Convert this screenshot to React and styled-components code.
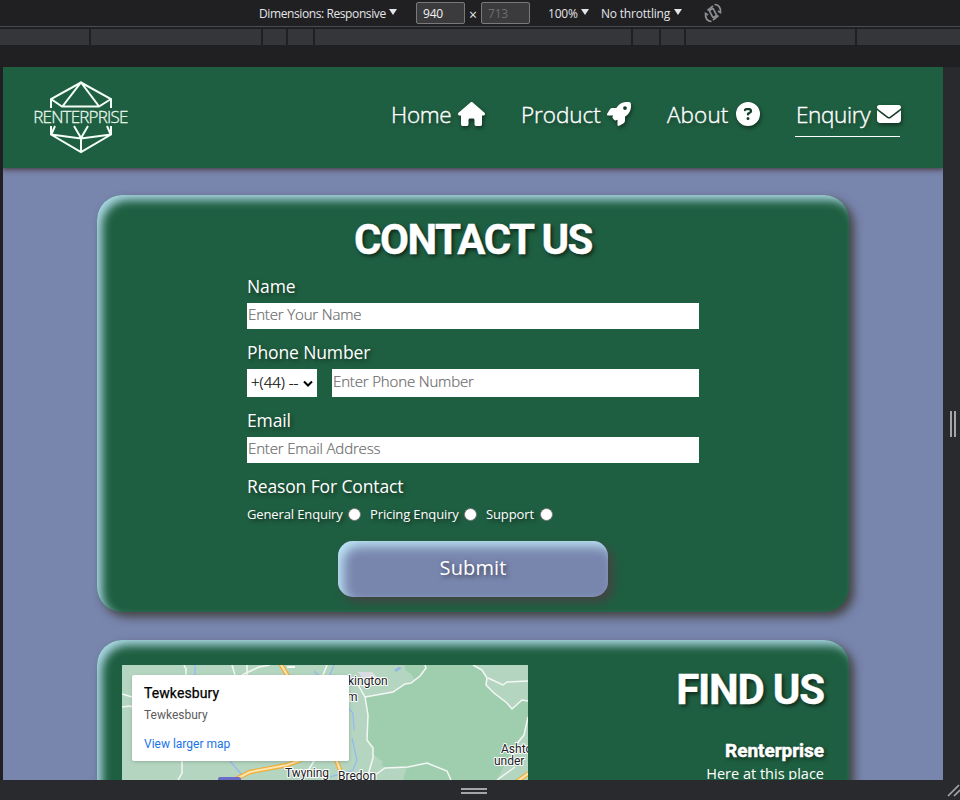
import React from "react";
import styled, { createGlobalStyle, css } from "styled-components";
import { FaHouse, FaRocket, FaCircleQuestion, FaEnvelope } from "react-icons/fa6";

const GlobalStyle = createGlobalStyle`
  * { box-sizing: border-box; }
  body { margin: 0; background: #202023; overflow: hidden; }
`;

const body = `"Open Sans", "Noto Sans", sans-serif`;
const head = `Roboto, "Liberation Sans", sans-serif`;
const green = "#1f5f41";
const slate = "#7885ad";

const Screen = styled.div`
  width: 960px;
  height: 800px;
  display: flex;
  flex-direction: column;
  overflow: hidden;
  background: #202023;
`;

/* device toolbar */
const Toolbar = styled.div`
  height: 27px;
  flex: none;
  display: flex;
  align-items: center;
  padding-left: 259px;
  border-bottom: 1px solid #4a4c50;
  background: #202023;
  color: #e4e5e8;
  font: 12px/26px ${body};
  white-space: nowrap;
`;
const Choice = styled.div`
  width: ${(p) => p.$w}px;
  margin-left: ${(p) => p.$before || 0}px;
  margin-right: ${(p) => p.$gap}px;
  padding-top: 1px;
  display: flex;
  align-items: center;
  justify-content: space-between;
  letter-spacing: ${(p) => p.$ls || 0}px;
`;
const Caret = styled.span`
  border: 4px solid transparent;
  border-top: 6px solid #e4e5e8;
  border-bottom: 0;
  margin-bottom: 3px;
`;
const SizeBox = styled.div`
  width: 49px;
  height: 22px;
  border: 1px solid #77797c;
  border-radius: 2px;
  background: #3b3b3d;
  padding-left: 6px;
  line-height: 22px;
  letter-spacing: -0.2px;
  color: ${(p) => (p.$off ? "#6d6e70" : "#f1f1f2")};
`;
const Times = styled.span`
  width: 16px;
  padding-top: 3px;
  text-align: center;
  font-size: 14px;
`;
const RotateIcon = styled.svg`
  width: 20px;
  height: 20px;
  margin-left: 1px;
`;

const Ruler = styled.div`
  height: 16px;
  flex: none;
  margin: 2px 0 22px;
  display: grid;
  grid-template-columns: 89px 170px 23px 25px 316px 26px 23px 169px 1fr;
  column-gap: 2px;
`;
const Segment = styled.div`
  background: #35363a;
`;

const Stage = styled.div`
  flex: 1;
  min-height: 0;
  display: grid;
  grid-template: 713px 20px / 940px 17px;
  padding-left: 3px;
`;
const SideGrip = styled.div`
  background: #292a2e;
  display: flex;
  align-items: center;
  justify-content: center;
  gap: 2px;
  padding-left: 3px;
`;
const BottomGrip = styled.div`
  background: #292a2e;
  margin-left: -3px;
  display: flex;
  flex-direction: column;
  align-items: center;
  justify-content: center;
  gap: 2px;
  padding: 2px 0 0 5px;
`;
const Bar = styled.span`
  background: #a3a5a8;
  ${(p) => (p.$v ? "width: 2px; height: 26px;" : "width: 26px; height: 2px;")}
`;
const Corner = styled.div`
  background: #292a2e;
  display: flex;
  align-items: flex-end;
  justify-content: flex-end;
  svg { width: 13px; height: 14px; display: block; margin-bottom: 2px; }
`;

/* page */
const Page = styled.main`
  background: ${slate};
  overflow: hidden;
`;
const Header = styled.header`
  height: 101px;
  padding: 0 43px 0 27px;
  display: flex;
  justify-content: space-between;
  background: ${green};
  box-shadow: 0 1px 5px 1px rgba(70, 55, 60, 0.9);
`;
const Logo = styled.svg`
  width: 104px;
  height: 80px;
  margin-top: 11px;
  text { font: 300 17px ${body}; fill: #e6f7ec; stroke: #e6f7ec; stroke-width: 0.3px; }
`;
const Nav = styled.nav`
  display: flex;
  gap: 36px;
  margin-top: 28px;
  height: 42px;
`;
const NavLink = styled.a`
  width: ${(p) => p.$w}px;
  padding-left: 1px;
  display: flex;
  justify-content: space-between;
  white-space: nowrap;
  color: #fff;
  font: 300 22.5px/40px ${body};
  -webkit-text-stroke: 0.4px #fff;
  letter-spacing: ${(p) => p.$ls}px;
  text-shadow: 2px 2px 4px rgba(0, 0, 0, 0.45);
  border-bottom: ${(p) => (p.$active ? "1px solid #fff" : "0")};
  svg {
    flex: none;
    height: 24px;
    width: ${(p) => p.$icon}px;
    margin-top: 7px;
    margin-right: -1px;
    filter: drop-shadow(1px 2px 2px rgba(0, 0, 0, 0.5));
  }
`;

const Card = styled.section`
  width: 752px;
  height: ${(p) => p.$h}px;
  margin: ${(p) => p.$top}px auto 0;
  border-radius: 25px;
  background: ${green};
  box-shadow: inset 6px 6px 10px -1px lightblue, 5px 5px 10px #444;
`;
const Title = styled.h1`
  margin: 0;
  height: 48px;
  font: 700 42px/50px ${head};
  letter-spacing: ${(p) => p.$ls}px;
  color: #fff;
  white-space: nowrap;
  -webkit-text-stroke: 0.4px #fff;
  text-shadow: 2px 2px 4px rgba(0, 0, 0, 0.65);
`;
const ContactCard = styled(Card)`
  padding-top: 20px;
  text-align: center;
`;
const Form = styled.form`
  width: 452px;
  margin-left: 150px;
  text-align: left;
  display: flex;
  flex-direction: column;
`;
const Label = styled.label`
  margin-top: 8px;
  height: 32px;
  color: #fff;
  font: 400 17.5px/30px ${body};
  letter-spacing: -0.12px;
  text-shadow: 2px 2px 4px rgba(0, 0, 0, 0.5);
`;
const control = css`
  height: ${(p) => p.$h || 26}px;
  border: 0;
  border-radius: 0;
  background: #fff;
  font: 300 15px/22px ${body};
`;
const Input = styled.input`
  ${control}
  width: 100%;
  padding: 0 1px 4px;
  letter-spacing: -0.15px;
  &::placeholder {
    color: #6b6b6b;
    opacity: 1;
    -webkit-text-stroke: 0.2px #6b6b6b;
  }
`;
const PhoneRow = styled.div`
  display: grid;
  grid-template-columns: 70px 367px;
  gap: 15px;
`;
const Code = styled.div`
  ${control}
  padding: 0 4px 2px 4px;
  display: flex;
  align-items: center;
  justify-content: space-between;
  color: #000;
  white-space: nowrap;
  -webkit-text-stroke: 0.2px #000;
  svg { width: 10px; height: 8px; margin-top: 3px; }
`;
const CodeText = styled.span`
  width: 48px;
  overflow: hidden;
`;
const Radios = styled.div`
  height: 22px;
  display: flex;
  gap: 9px;
`;
const Radio = styled.label`
  width: ${(p) => p.$w}px;
  display: flex;
  align-items: center;
  justify-content: space-between;
  white-space: nowrap;
  color: #fff;
  font: 400 13px/20px ${body};
  letter-spacing: -0.12px;
  text-shadow: 2px 2px 4px rgba(0, 0, 0, 0.6);
`;
const Dot = styled.span`
  flex: none;
  width: 13px;
  height: 13px;
  margin-top: 1px;
  border-radius: 50%;
  border: 1px solid #767676;
  background: #fff;
`;
const Submit = styled.button`
  width: 270px;
  height: 56px;
  margin: 16px 0 0 91px;
  padding: 0 0 2px;
  border: 0;
  border-radius: 15px;
  background: ${slate};
  color: #fff;
  font: 400 20px/54px ${body};
  letter-spacing: 0.1px;
  text-shadow: 2px 2px 4px rgba(0, 0, 0, 0.5);
  box-shadow: inset 6px 6px 12px -1px #bfe8f8, 5px 5px 10px #444;
`;

const FindCard = styled(Card)`
  padding: 25px 25px 0;
  display: flex;
  justify-content: space-between;
`;
const MapFrame = styled.div`
  position: relative;
  width: 406px;
  height: 300px;
  overflow: hidden;
  background: #b4d6c1;
  > svg { display: block; width: 406px; height: 115px; }
  text {
    font: 400 12px ${head};
    fill: #202124;
    stroke: #fff;
    stroke-width: 2px;
    stroke-linejoin: round;
    paint-order: stroke;
  }
`;
const Place = styled.div`
  position: absolute;
  left: 10px;
  top: 10px;
  width: 217px;
  height: 86px;
  padding: 10px 12px;
  background: #fff;
  border-radius: 2px;
  box-shadow: 0 1px 4px -1px rgba(0, 0, 0, 0.3);
  font: 400 12px/16px ${head};
  color: #5b5b5b;
`;
const PlaceName = styled.div`
  font: 400 14px/17px ${head};
  letter-spacing: 0.08px;
  color: #000;
  -webkit-text-stroke: 0.25px #000;
  margin-bottom: 5px;
`;
const MapLink = styled.a`
  display: block;
  margin-top: 13px;
  color: #1a73e8;
`;
const Address = styled.div`
  text-align: right;
  color: #fff;
  white-space: nowrap;
`;
const Company = styled.h2`
  margin: 27px 0 0;
  height: 22px;
  font: 700 19px/22px ${head};
  letter-spacing: -0.05px;
  -webkit-text-stroke: 0.5px #fff;
  text-shadow: 2px 2px 4px rgba(0, 0, 0, 0.65);
`;
const Line = styled.p`
  margin: 0;
  font: 400 14.5px/24px ${body};
`;

const links = [
  { text: "Home", Icon: FaHouse, w: 94, icon: 27, ls: -0.3 },
  { text: "Product", Icon: FaRocket, w: 110, icon: 24, ls: -0.05 },
  { text: "About", Icon: FaCircleQuestion, w: 93, icon: 24, ls: 0.1 },
  { text: "Enquiry", Icon: FaEnvelope, w: 105, icon: 24, ls: -0.35, active: true },
];

const reasons = [
  { text: "General Enquiry", w: 114 },
  { text: "Pricing Enquiry", w: 107 },
  { text: "Support", w: 67 },
];

function DeviceToolbar() {
  return (
    <Toolbar>
      <Choice $w={138} $gap={19} $ls={-0.4}>Dimensions: Responsive<Caret /></Choice>
      <SizeBox>940</SizeBox>
      <Times>×</Times>
      <SizeBox $off>713</SizeBox>
      <Choice $w={41} $before={18} $gap={12} $ls={-0.2}>100%<Caret /></Choice>
      <Choice $w={81} $gap={20} $ls={-0.2}>No throttling<Caret /></Choice>
      <RotateIcon viewBox="0 0 20 20" fill="none" stroke="#8b8d90" strokeWidth="1.7">
        <rect x="7.8" y="6" width="4.400" height="8" rx="0.800" transform="rotate(-28 10 10)" />
        <path d="M4.500 7.500 10 3M10 17l5.500-4.500" />
        <path d="M11.500 1.500C15.500 1.500 18 4.500 17.500 9.500L15 8M8.500 18.500C4.500 18.500 2 15.500 2.500 10.500L5 12" />
      </RotateIcon>
    </Toolbar>
  );
}

function Brand() {
  return (
    <Logo viewBox="30 78 104 80" fill="none" stroke="#f4fff8" strokeWidth="2">
      <path d="M51 108V99L81 82.500l30 16.500v9M51 99l11 7.500h37l12-7.500M62 107l19-24.500L99.500 107" />
      <path d="M51 126v8.500L81 152l30-17.500V126M51 134.500l30 4 30-4M81 138v14M74 126l7 12 7-12M55 126l-3.500 8M107 126l3.500 8" />
      <text x="33.300" y="123" textLength="95" lengthAdjust="spacing">RENTERPRISE</text>
    </Logo>
  );
}

function AreaMap() {
  return (
    <svg viewBox="0 0 406 115" fill="none">
      <rect width="406" height="115" fill="#b4d6c1" />
      <path d="M283 0h68l9 5 5 8-1 7 8 8 13 10 5 6 10-9 6 1v79H281l4-13-22 1-12-10v-10l-6-8 1-25-3-18 28-5 12-8 10-4-4-6-6-4z" fill="#9fceae" />
      <path d="M251 89l10 8-4 7-6 4z" fill="#b4d6c1" />
      <path d="M406 52l-5 18-8 8-18 37h31z" fill="#b4d6c1" />
      <path d="M236 7h14l6 6-14 2z" fill="#d9dde2" />
      <path d="M272 5l5-3 3 1-6 4z" fill="#8fb7ea" />
      <g stroke="#96b9ee" strokeWidth="1.300">
        <path d="M73 0v10M226 43l5 5 1 17M230 73l5 22-4 10c-8 4-14 4-23 7M108 96l12 14M192 6l12 12M212 0l-5 12" />
      </g>
      <g stroke="#f4f7f5" strokeWidth="1.500">
        <path d="M62 0l2 4v6M110 0l3 10M120 10l17-8 11-2M0 29l10 3M0 42l8-1 8 3M60 96v12l-4 7M192 96l-11 18M205 0l-4 10M125 0v10" />
        <path d="M235 18l8 14 3 18-1 25 6 8v10l-5 17M243 32l28-5 12-8 6-1 9-7 6-8-1-3M246 115l7-5 10-7 23-1 19-4 20 8 4 9" />
        <path d="M351 0l9 5 5 8-1 7 8 8 13 10 5 6 10-9 6 1M366 13l15 7 4-3 21-1M406 52l-4 18-8 10M393 102l-18 13" />
      </g>
      <path d="M235 0v22l2 30-1 32" stroke="#c4cdca" strokeWidth="1" />
      <g stroke="#f0ad35" strokeWidth="4.500">
        <path d="M158-2l9 15M108 117l20-10 37-7 14-5M214 94l8 22M393 118l14-10" />
      </g>
      <g stroke="#fbe3ae" strokeWidth="2.200">
        <path d="M158-2l9 15M108 117l20-10 37-7 14-5M214 94l8 22M393 118l14-10" />
      </g>
      <path d="M165 2h8" stroke="#f4f7f5" strokeWidth="2" />
      <rect x="96" y="112" width="23" height="10" rx="2" fill="#6b6bc8" />
      <text x="226" y="19.500">kington</text>
      <text x="225" y="35.500">m</text>
      <text x="163" y="112" textLength="44">Twyning</text>
      <text x="216" y="115">Bredon</text>
      <text x="379" y="88">Ashton</text>
      <text x="372" y="100">under</text>
    </svg>
  );
}

export default function App() {
  return (
    <Screen>
      <GlobalStyle />
      <DeviceToolbar />
      <Ruler>
        {Array.from({ length: 9 }, (_, i) => <Segment key={i} />)}
      </Ruler>
      <Stage>
        <Page>
          <Header>
            <Brand />
            <Nav>
              {links.map(({ text, Icon, w, icon, ls, active }) => (
                <NavLink key={text} $w={w} $icon={icon} $ls={ls} $active={active}>
                  {text}
                  <Icon />
                </NavLink>
              ))}
            </Nav>
          </Header>
          <ContactCard $h={417} $top={27}>
            <Title $ls={-1.5}>CONTACT US</Title>
            <Form>
              <Label>Name</Label>
              <Input placeholder="Enter Your Name" />
              <Label>Phone Number</Label>
              <PhoneRow>
                <Code $h={28}>
                  <CodeText>+(44) --</CodeText>
                  <svg viewBox="0 0 10 8" fill="none" stroke="#000" strokeWidth="2"><path d="M1 1.500l4 4 4-4" /></svg>
                </Code>
                <Input placeholder="Enter Phone Number" $h={28} />
              </PhoneRow>
              <Label>Email</Label>
              <Input placeholder="Enter Email Address" />
              <Label>Reason For Contact</Label>
              <Radios>
                {reasons.map((r) => (
                  <Radio key={r.text} $w={r.w}>{r.text}<Dot /></Radio>
                ))}
              </Radios>
              <Submit type="button">Submit</Submit>
            </Form>
          </ContactCard>
          <FindCard $h={400} $top={28}>
            <MapFrame>
              <AreaMap />
              <Place>
                <PlaceName>Tewkesbury</PlaceName>
                Tewkesbury
                <MapLink>View larger map</MapLink>
              </Place>
            </MapFrame>
            <Address>
              <Title $ls={-1.2}>FIND US</Title>
              <Company>Renterprise</Company>
              <Line>Here at this place</Line>
            </Address>
          </FindCard>
        </Page>
        <SideGrip><Bar $v /><Bar $v /></SideGrip>
        <BottomGrip><Bar /><Bar /></BottomGrip>
        <Corner>
          <svg viewBox="0 0 13 14" stroke="#a3a5a8" strokeWidth="1.700"><path d="M1 12L12 1M7 12l6-6" /></svg>
        </Corner>
      </Stage>
    </Screen>
  );
}
